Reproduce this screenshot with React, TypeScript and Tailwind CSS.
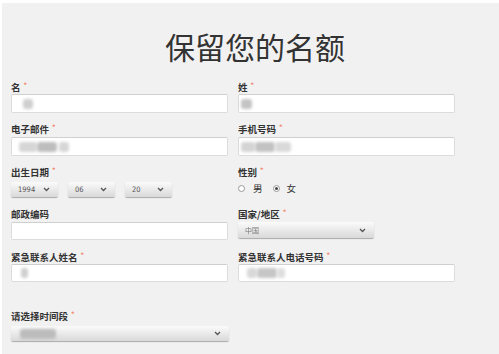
import React from 'react';

const font = { fontFamily: '"Noto Sans CJK SC", "Noto Sans", sans-serif' };

function Label({ text, req = true }: { text: string; req?: boolean }) {
    return (
        <div className="h-[12px] leading-[12px] text-[9.5px] font-bold text-[#333] flex items-start">
            <span>{text}</span>
            {req && <span className="ml-[3px] text-[7px] leading-[9px] text-[#f08a6c]">*</span>}
        </div>
    );
}

function Blob({ w, ml = 0, shade = '#c8c8c8' }: { w: number; ml?: number; shade?: string }) {
    return <div className="h-[10px] rounded-[3px] blur-[1.5px]" style={{ width: w, marginLeft: ml, background: shade }} />;
}

function Input({ h = 19, children }: { h?: number; children?: React.ReactNode }) {
    return (
        <div className="w-[217px] bg-white border border-[#dcdcdc] border-t-[#cfcfcf] rounded-[2px] flex items-center" style={{ height: h }}>
            {children}
        </div>
    );
}

function Chevron() {
    return (
        <svg width="7" height="5" viewBox="0 0 7 5" className="shrink-0">
            <polyline points="1,1 3.5,3.5 6,1" fill="none" stroke="#555" strokeWidth="1.3" />
        </svg>
    );
}

function Select({ w, h = 15, children }: { w: number; h?: number; children?: React.ReactNode }) {
    return (
        <div
            className="bg-gradient-to-b from-[#fbfbfb] to-[#d9d9d9] rounded-[2px] shadow-[0_1px_1px_rgba(0,0,0,0.3)] flex items-center justify-between pl-[7px] pr-[8px]"
            style={{ width: w, height: h }}
        >
            {children}
            <Chevron />
        </div>
    );
}

function Radio({ checked }: { checked?: boolean }) {
    return (
        <div className="w-[7px] h-[7px] rounded-full border border-[#999] flex items-center justify-center bg-white">
            {checked && <div className="w-[3px] h-[3px] rounded-full bg-[#444]" />}
        </div>
    );
}

const num = { fontFamily: '"DejaVu Sans Condensed", "Liberation Sans", sans-serif' };

export default function App() {
    return (
        <div className="w-[499px] h-[354px] bg-white pt-[3px] pl-[2px] overflow-hidden" style={font}>
            <div className="h-full bg-[#f2f1f2] pl-[9px]">
                <div className="pt-[26px] h-[78px] text-center text-[30px] leading-[34px] text-[#333]">保留您的名额</div>

                {/* row 1 */}
                <div className="flex gap-[10px]">
                    <div>
                        <Label text="名" />
                        <div className="mt-[1px]">
                            <Input><Blob w={10} ml={11} shade="#cfcfcf" /></Input>
                        </div>
                    </div>
                    <div>
                        <Label text="姓" />
                        <div className="mt-[1px]">
                            <Input><Blob w={11} ml={2} shade="#c4c4c4" /></Input>
                        </div>
                    </div>
                </div>

                {/* row 2 */}
                <div className="flex gap-[10px] mt-[10px]">
                    <div>
                        <Label text="电子邮件" />
                        <div className="mt-[2px]">
                            <Input>
                                <Blob w={18} ml={7} shade="#d6d6d6" />
                                <Blob w={20} shade="#bdbdbd" />
                                <Blob w={10} ml={2} shade="#d6d6d6" />
                            </Input>
                        </div>
                    </div>
                    <div>
                        <Label text="手机号码" />
                        <div className="mt-[2px]">
                            <Input>
                                <Blob w={14} ml={2} shade="#d4d4d4" />
                                <Blob w={20} shade="#c2c2c2" />
                                <Blob w={16} shade="#d9d9d9" />
                            </Input>
                        </div>
                    </div>
                </div>

                {/* row 3 */}
                <div className="flex gap-[10px] mt-[10px]">
                    <div className="w-[217px]">
                        <Label text="出生日期" />
                        <div className="mt-[4px] flex gap-[10px]">
                            <Select w={47}><span className="text-[7.5px] text-[#555]" style={num}>1994</span></Select>
                            <Select w={47}><span className="text-[7.5px] text-[#555]" style={num}>06</span></Select>
                            <Select w={47}><span className="text-[7.5px] text-[#555]" style={num}>20</span></Select>
                        </div>
                    </div>
                    <div>
                        <Label text="性别" />
                        <div className="mt-[4px] h-[12px] flex items-center text-[9.5px] text-[#333]">
                            <Radio />
                            <span className="ml-[8px]">男</span>
                            <div className="ml-[10px]"><Radio checked /></div>
                            <span className="ml-[7px]">女</span>
                        </div>
                    </div>
                </div>

                {/* row 4 */}
                <div className="flex gap-[10px] mt-[11px]">
                    <div>
                        <Label text="邮政编码" req={false} />
                        <div className="mt-[2px]">
                            <Input h={18} />
                        </div>
                    </div>
                    <div>
                        <Label text="国家/地区" />
                        <div className="mt-[2px]">
                            <Select w={136} h={16}>
                                <span className="text-[7px] text-[#777] blur-[0.6px]">中国</span>
                            </Select>
                        </div>
                    </div>
                </div>

                {/* row 5 */}
                <div className="flex gap-[10px] mt-[11px]">
                    <div>
                        <Label text="紧急联系人姓名" />
                        <div className="mt-[1px]">
                            <Input h={18}><Blob w={7} ml={9} shade="#cfcfcf" /></Input>
                        </div>
                    </div>
                    <div>
                        <Label text="紧急联系人电话号码" />
                        <div className="mt-[1px]">
                            <Input h={18}>
                                <Blob w={10} ml={8} shade="#d8d8d8" />
                                <Blob w={20} shade="#c6c6c6" />
                                <Blob w={8} shade="#dedede" />
                            </Input>
                        </div>
                    </div>
                </div>

                {/* row 6 */}
                <div className="mt-[28px]">
                    <Label text="请选择时间段" />
                    <div className="mt-[4px]">
                        <Select w={218} h={15}>
                            <Blob w={36} ml={2} shade="#bcbcbc" />
                        </Select>
                    </div>
                </div>
            </div>
        </div>
    );
}
